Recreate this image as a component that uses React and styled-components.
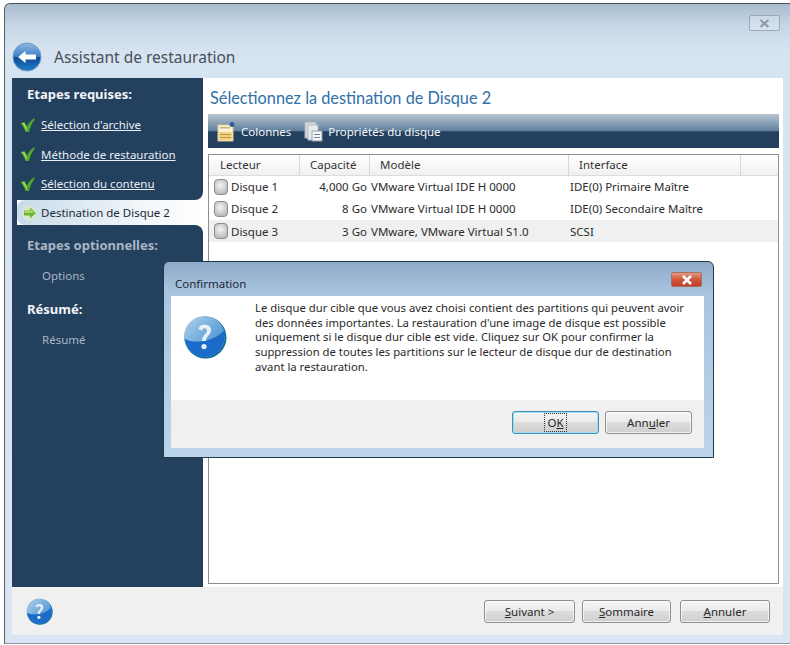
import React from 'react';
import styled, { createGlobalStyle } from 'styled-components';

const GlobalStyle = createGlobalStyle`
  html, body { margin: 0; padding: 0; background: #fff; }
  body { width: 790px; height: 645px; overflow: hidden; font-family: "Noto Sans", "DejaVu Sans", sans-serif; font-size: 12px; color: #222; }
  #root { width: 790px; height: 645px; }
`;

const steps = [
  { label: 'Sélection d\'archive' },
  { label: 'Méthode de restauration' },
  { label: 'Sélection du contenu' },
];

const disks = [
  { name: 'Disque 1', size: '4,000 Go', model: 'VMware Virtual IDE H 0000', bus: 'IDE(0) Primaire Maître', h: '21px' },
  { name: 'Disque 2', size: '8 Go', model: 'VMware Virtual IDE H 0000', bus: 'IDE(0) Secondaire Maître', h: '23px' },
  { name: 'Disque 3', size: '3 Go', model: 'VMware, VMware Virtual S1.0', bus: 'SCSI', h: '22px', active: true },
];

const columns = '92px 70px 199px 172px 1fr';

function CheckIcon() {
  return (
    <svg width="15" height="16" viewBox="0 0 15 16">
      <path d="M0.5 6 L4.5 5 L7 9.5 C8.5 6 11 3 14.5 1 L14.5 3 C11.5 6.5 10 10.5 9 15 L5.5 15 C4.5 11.5 2.5 8.5 0.5 6 Z" fill="#4fa82a" />
      <path d="M2 6.5 L4.2 6 L7 11.5 L6.5 14 C5.5 11 4 8.5 2 6.5 Z" fill="#a6e06a" />
    </svg>
  );
}

function ArrowIcon() {
  return (
    <svg width="15" height="16" viewBox="0 0 15 16">
      <circle cx="7.5" cy="8" r="7.5" fill="#dbe8d0" />
      <path d="M14 8 L8 2.5 L8 5.5 L2 5.5 L2 10.5 L8 10.5 L8 13.5 Z" fill="#69b52f" />
      <path d="M8.5 4 L12.5 8 L2.5 8 L2.5 6 L8.5 6 Z" fill="#a5da6b" />
    </svg>
  );
}

function BackIcon() {
  return (
    <svg width="30" height="30" viewBox="0 0 30 30">
      <defs>
        <linearGradient id="back" x1="0" y1="0" x2="0" y2="1">
          <stop offset="0" stopColor="#8fb9e2" />
          <stop offset="0.48" stopColor="#3f7fc4" />
          <stop offset="0.52" stopColor="#104a9a" />
          <stop offset="1" stopColor="#1f7fc8" />
        </linearGradient>
      </defs>
      <circle cx="15" cy="15" r="14" fill="url(#back)" stroke="#6f9cc6" />
      <path d="M6 15 L13.5 9 L13.5 12.5 L24 12.5 L24 17.5 L13.5 17.5 L13.5 21 Z" fill="#fff" />
    </svg>
  );
}

function QuestionIcon({ size, id }) {
  return (
    <svg width={size} height={size} viewBox="0 0 44 44">
      <defs>
        <linearGradient id={id} x1="0" y1="0" x2="1" y2="1">
          <stop offset="0" stopColor="#b4d2ec" />
          <stop offset="0.55" stopColor="#6aa6da" />
          <stop offset="1" stopColor="#2f7fcb" />
        </linearGradient>
      </defs>
      <circle cx="22.5" cy="22.5" r="21" fill="#0f6a94" />
      <circle cx="21.5" cy="21.5" r="20.5" fill={`url(#${id})`} />
      <path d="M1.5 24 C12 29 31 27 41.5 15 C44 27 36 42 21 42 C10 42 3 33 1.5 24 Z" fill="#1b6bc8" />
      <path d="M15.5 14 C16 8.5 28 8 28 15 C28 20.5 23 20.5 23 26 L19 26 C19 19.5 24 19.5 24 15.5 C24 12.5 19.5 12.5 19 15.5 Z" fill="#e8f1f9" />
      <circle cx="21" cy="31.5" r="2.6" fill="#e8f1f9" />
    </svg>
  );
}

function ColumnsIcon() {
  return (
    <svg width="19" height="21" viewBox="0 0 19 21">
      <rect x="1" y="4" width="15" height="16" fill="#fbf3d6" stroke="#d8c993" />
      <rect x="2" y="11" width="13" height="8" fill="#f3d27a" />
      <rect x="3" y="6" width="10" height="1.5" fill="#c9b37a" />
      <rect x="3" y="13" width="11" height="1" fill="#b39656" />
      <rect x="3" y="16" width="11" height="1" fill="#b39656" />
      <circle cx="15" cy="3.5" r="2.5" fill="#2f5f96" />
    </svg>
  );
}

function PropsIcon() {
  return (
    <svg width="19" height="21" viewBox="0 0 19 21">
      <rect x="1" y="1" width="11" height="16" fill="#d5d9dd" stroke="#aab2ba" />
      <rect x="4" y="4" width="10" height="15" fill="#e8ebee" stroke="#b4bbc2" />
      <rect x="8" y="10" width="10" height="10" fill="#f5f6f7" stroke="#8fa0b1" />
      <rect x="10" y="13" width="6" height="1" fill="#6a85a3" />
      <rect x="10" y="16" width="6" height="1" fill="#6a85a3" />
    </svg>
  );
}

function Hotkey({ children }) {
  return <Key>{children}</Key>;
}

export default function App() {
  return (
    <>
      <GlobalStyle />
      <Page>
        <Window>
          <Header>
            <CloseGhost>
              <svg width="11" height="9" viewBox="0 0 11 9">
                <path d="M1.5 1 L9.5 8 M9.5 1 L1.5 8" stroke="#8c98a5" strokeWidth="2" />
              </svg>
            </CloseGhost>
            <TitleRow>
              <BackIcon />
              <WindowTitle>Assistant de restauration</WindowTitle>
            </TitleRow>
          </Header>

          <Main>
            <Sidebar>
              <NavBlock $radius="bottom">
                <NavHeading>Etapes requises:</NavHeading>
                {steps.map((s) => (
                  <DoneStep key={s.label}>
                    <CheckIcon />
                    <StepLink>{s.label}</StepLink>
                  </DoneStep>
                ))}
              </NavBlock>
              <CurrentWrap>
                <CurrentStep>
                  <ArrowIcon />
                  <span>Destination de Disque 2</span>
                </CurrentStep>
              </CurrentWrap>
              <NavBlock $radius="top" $grow>
                <NavHeading $muted $first>Etapes optionnelles:</NavHeading>
                <PendingStep>Options</PendingStep>
                <NavHeading $second>Résumé:</NavHeading>
                <PendingStep>Résumé</PendingStep>
              </NavBlock>
            </Sidebar>

            <Content>
              <PageTitle>Sélectionnez la destination de Disque 2</PageTitle>
              <Toolbar>
                <ToolButton><ColumnsIcon />Colonnes</ToolButton>
                <ToolButton><PropsIcon />Propriétés du disque</ToolButton>
              </Toolbar>
              <Table>
                <HeadRow>
                  <HeadCell>Lecteur</HeadCell>
                  <HeadCell>Capacité</HeadCell>
                  <HeadCell>Modèle</HeadCell>
                  <HeadCell>Interface</HeadCell>
                  <HeadCell />
                </HeadRow>
                {disks.map((d) => (
                  <DiskRow key={d.name} $active={d.active} $h={d.h}>
                    <NameCell><DiskIcon />{d.name}</NameCell>
                    <SizeCell>{d.size}</SizeCell>
                    <span>{d.model}</span>
                    <span>{d.bus}</span>
                  </DiskRow>
                ))}
              </Table>
            </Content>
          </Main>

          <Footer>
            <QuestionIcon size={27} id="qhelp" />
            <FooterButtons>
              <Button $w="91px"><Hotkey>S</Hotkey>uivant &gt;</Button>
              <Button $w="89px"><Hotkey>S</Hotkey>ommaire</Button>
              <Button $w="90px" $gap="2px"><Hotkey>A</Hotkey>nnuler</Button>
            </FooterButtons>
          </Footer>
        </Window>

        <Dialog>
          <DialogTitleBar>
            <span>Confirmation</span>
            <CloseRed>
              <svg width="12" height="10" viewBox="0 0 12 10">
                <path d="M2 1 L10 9 M10 1 L2 9" stroke="#fff" strokeWidth="2.6" />
              </svg>
            </CloseRed>
          </DialogTitleBar>
          <DialogBody>
            <DialogIcon><QuestionIcon size={44} id="qdialog" /></DialogIcon>
            <DialogText>
              Le disque dur cible que vous avez choisi contient des partitions qui peuvent avoir<br />
              des données importantes. La restauration d'une image de disque est possible<br />
              uniquement si le disque dur cible est vide. Cliquez sur OK pour confirmer la<br />
              suppression de toutes les partitions sur le lecteur de disque dur de destination<br />
              avant la restauration.
            </DialogText>
          </DialogBody>
          <DialogFooter>
            <Button $w="87px" $primary><FocusLabel>O<Hotkey>K</Hotkey></FocusLabel></Button>
            <Button $w="87px">Ann<Hotkey>u</Hotkey>ler</Button>
          </DialogFooter>
        </Dialog>
      </Page>
    </>
  );
}

const Page = styled.div`
  position: relative;
  width: 790px;
  height: 645px;
  padding: 3px 0 0 4px;
  box-sizing: border-box;
`;

const Window = styled.div`
  width: 786px;
  height: 641px;
  box-sizing: border-box;
  display: flex;
  flex-direction: column;
  border-top: 1px solid #4a4f55;
  border-left: 1px solid #5a5f66;
  border-bottom: 1px solid #8b96a2;
  border-top-left-radius: 6px;
  padding: 0 7px 8px 7px;
  background: linear-gradient(#a9bccd 0, #c6d6e6 22px, #d6e3f1 48px, #d9e5f2 100%);
`;

const Header = styled.div`
  height: 74px;
  position: relative;
  display: flex;
  align-items: flex-end;
  flex: none;
`;

const CloseGhost = styled.div`
  position: absolute;
  top: 11px;
  right: 3px;
  width: 31px;
  height: 16px;
  box-sizing: border-box;
  border: 1px solid #9aa9b8;
  border-radius: 2px;
  display: flex;
  align-items: center;
  justify-content: center;
  background: rgba(255, 255, 255, 0.25);
`;

const TitleRow = styled.div`
  display: flex;
  align-items: center;
  gap: 12px;
  padding-bottom: 6px;
`;

const WindowTitle = styled.div`
  font-size: 15.5px;
  color: #4a5058;
  font-weight: 400;
`;

const Main = styled.div`
  flex: 1;
  min-height: 0;
  display: flex;
`;

const Sidebar = styled.nav`
  width: 191px;
  flex: none;
  display: flex;
  flex-direction: column;
  background: #fff;
`;

const NavBlock = styled.div`
  background: #24405f;
  padding: 8px 0 6px 0;
  height: ${(p) => (p.$grow ? 'auto' : '122px')};
  box-sizing: border-box;
  flex: ${(p) => (p.$grow ? 1 : 'none')};
  border-bottom-right-radius: ${(p) => (p.$radius === 'bottom' ? '8px' : 0)};
  border-top-right-radius: ${(p) => (p.$radius === 'top' ? '8px' : 0)};
`;

const NavHeading = styled.div`
  font-weight: 700;
  font-size: 13px;
  line-height: 16px;
  color: ${(p) => (p.$muted ? '#a9b7c4' : '#f2f5f8')};
  padding-left: 15px;
  margin-top: ${(p) => (p.$first ? '4px' : p.$second ? '17px' : '0')};
  margin-bottom: ${(p) => (p.$first ? '15px' : p.$second ? '15px' : '8px')};
`;

const DoneStep = styled.div`
  height: 29.5px;
  display: flex;
  align-items: center;
  gap: 6px;
  padding-left: 8px;
  svg { flex: none; }
`;

const StepLink = styled.a`
  color: #e8eef4;
  font-size: 11.5px;
  text-decoration: underline;
`;

const CurrentWrap = styled.div`
  height: 25px;
  flex: none;
  background: #fff;
  border-left: 5px solid #24405f;
`;

const CurrentStep = styled.div`
  height: 100%;
  display: flex;
  align-items: center;
  gap: 4px;
  padding-left: 5px;
  font-size: 11.5px;
  color: #1d2a36;
  border-radius: 8px 0 0 8px;
  background: linear-gradient(90deg, #c9dcea, #f2f7fa 70%, #fff);
`;

const PendingStep = styled.div`
  color: #a9b7c4;
  font-size: 11.5px;
  line-height: 16px;
  padding-left: 30px;
`;

const Content = styled.main`
  flex: 1;
  min-width: 0;
  background: #fff;
  display: flex;
  flex-direction: column;
  padding: 0 4px 3px 5px;
`;

const PageTitle = styled.h1`
  margin: 9px 0 5px 2px;
  font-family: "Lato", "Noto Sans", sans-serif;
  font-size: 16.3px;
  line-height: 22px;
  font-weight: 400;
  color: #2f70a8;
  white-space: nowrap;
`;

const Toolbar = styled.div`
  height: 34px;
  flex: none;
  display: flex;
  align-items: center;
  gap: 13px;
  padding-left: 9px;
  background: linear-gradient(#b8c6d2 0, #5f7f9c 50%, #24405f 52%, #24405f 100%);
`;

const ToolButton = styled.div`
  display: flex;
  align-items: center;
  gap: 5px;
  color: #f3f6f9;
  font-size: 11.5px;
`;

const Table = styled.div`
  flex: 1;
  margin-top: 6px;
  border: 1px solid #8e8e8e;
  background: #fff;
`;

const HeadRow = styled.div`
  display: grid;
  grid-template-columns: 91px 70px 199px 172px 1fr;
  height: 20px;
  background: linear-gradient(#fff, #f0f0f0);
  border-bottom: 1px solid #dcdcdc;
`;

const HeadCell = styled.div`
  padding-left: 10px;
  font-size: 11.5px;
  line-height: 20px;
  color: #333;
  border-right: 1px solid #d8d8d8;
  &:first-child { padding-left: 11px; }
  &:last-child { border-right: 0; }
`;

const DiskRow = styled.div`
  display: grid;
  grid-template-columns: ${columns};
  align-items: center;
  height: ${(p) => p.$h};
  font-size: 11.5px;
  color: #2b2b2b;
  background: ${(p) => (p.$active ? '#f0f0f0' : '#fff')};
  white-space: nowrap;
`;

const NameCell = styled.span`
  display: flex;
  align-items: center;
  gap: 3px;
  padding-left: 5px;
`;

const SizeCell = styled.span`
  text-align: right;
  padding-right: 4px;
`;

const DiskIcon = styled.i`
  display: block;
  width: 14px;
  height: 16px;
  border: 1px solid #8d8d8d;
  border-radius: 4px;
  box-sizing: border-box;
  background: radial-gradient(circle at 45% 40%, #f4f4f4, #bdbdbd 75%);
`;

const Footer = styled.footer`
  height: 48px;
  flex: none;
  background: #f0f0f0;
  display: flex;
  align-items: center;
  justify-content: space-between;
  padding: 0 13px 0 14px;
  box-sizing: border-box;
`;

const FooterButtons = styled.div`
  display: flex;
  gap: 7px;
`;

const Button = styled.button`
  width: ${(p) => p.$w};
  height: 23px;
  margin-left: ${(p) => p.$gap || 0};
  padding: 0;
  font-family: inherit;
  font-size: 11.5px;
  color: #2a2a2a;
  border: 1px solid ${(p) => (p.$primary ? '#3c90b8' : '#8e8f8f')};
  border-radius: 3px;
  background: linear-gradient(#f4f4f4 0, #ebebeb 48%, #dcdcdc 50%, #cfcfcf 100%);
  box-shadow: inset 0 0 0 1px ${(p) => (p.$primary ? '#a6dcef' : 'rgba(255,255,255,0.7)')};
`;

const Key = styled.span`
  text-decoration: underline;
`;

const FocusLabel = styled.span`
  outline: 1px dotted #333;
  padding: 1px 2px;
`;

const Dialog = styled.section`
  position: absolute;
  left: 163px;
  top: 261px;
  width: 551px;
  height: 197px;
  box-sizing: border-box;
  display: flex;
  flex-direction: column;
  padding: 0 9px 9px 7px;
  border: 1px solid #1f3b48;
  border-radius: 6px 6px 0 0;
  background: linear-gradient(#8eaac8 0, #a9c4df 30px, #bcd4ea 100%);
`;

const DialogTitleBar = styled.div`
  height: 34px;
  flex: none;
  display: flex;
  align-items: center;
  justify-content: space-between;
  padding: 8px 2px 0 4px;
  box-sizing: border-box;
  font-size: 11.5px;
  color: #1c2a38;
`;

const CloseRed = styled.div`
  width: 31px;
  height: 15px;
  box-sizing: border-box;
  display: flex;
  align-items: center;
  justify-content: center;
  border: 1px solid #a8705f;
  border-radius: 2px;
  background: linear-gradient(#e39a84, #d2553a 50%, #c0402a);
  margin-top: -7px;
`;

const DialogBody = styled.div`
  height: 104px;
  flex: none;
  background: #fff;
  display: flex;
`;

const DialogIcon = styled.div`
  width: 84px;
  flex: none;
  padding: 19px 0 0 12px;
  box-sizing: border-box;
`;

const DialogText = styled.p`
  margin: 5px 0 0 0;
  font-size: 11.3px;
  line-height: 14.7px;
  color: #2a2a2a;
  white-space: nowrap;
`;

const DialogFooter = styled.div`
  flex: 1;
  background: #f0f0f0;
  display: flex;
  justify-content: flex-end;
  align-items: center;
  gap: 6px;
  padding: 0 12px 3px 0;
`;
